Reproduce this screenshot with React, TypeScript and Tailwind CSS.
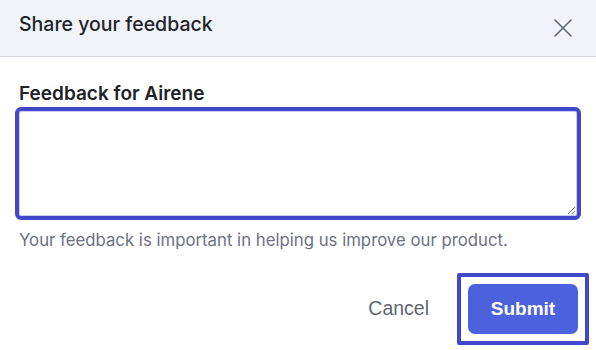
const App = () => {
  return (
    <div className="w-[596px] h-[350px] bg-white font-['Inter',sans-serif] overflow-hidden">
      {/* Header */}
      <div className="h-[57px] bg-[#f0f3f8] border-b border-[#d4d8e0] flex items-start justify-between pl-[19px] pr-[24px] pt-[12px]">
        <h2 className="text-[19.5px] leading-[24px] font-medium text-[#1f2328]">Share your feedback</h2>
        <svg width="18" height="18" viewBox="0 0 18 18" className="mt-[7px]" fill="none" stroke="#5f6672" strokeWidth="1.6" strokeLinecap="round">
          <path d="M1 1L17 17M17 1L1 17" />
        </svg>
      </div>

      {/* Body */}
      <div className="px-[19px] pt-[25px]">
        <label className="block text-[19px] font-semibold text-[#1f2328] leading-[24px] mb-[5px]">Feedback for Airene</label>
        <textarea className="block w-[558px] h-[105px] border border-[#c9cdef] rounded-[2px] outline-[4px] outline-solid outline-[#4248cc] bg-white" />
        <p className="mt-[12px] text-[16.75px] text-[#6b7280] leading-[24px]">Your feedback is important in helping us improve our product.</p>

        <div className="flex items-center justify-end gap-[28px] mt-[32px]">
          <button className="font-['Liberation_Sans',sans-serif] text-[19.5px] text-[#5f6672]">Cancel</button>
          {/* focused submit: square focus ring around the button */}
          <div className="-my-[11px] -mr-[12px] border-[4px] border-[#4248cc] rounded-[2px] p-[7px]">
            <button className="block w-[110px] h-[50px] rounded-[7px] bg-[#4c62dd] text-white font-['Liberation_Sans',sans-serif] font-bold text-[19px]">Submit</button>
          </div>
        </div>
      </div>
    </div>
  );
};

export default App;
